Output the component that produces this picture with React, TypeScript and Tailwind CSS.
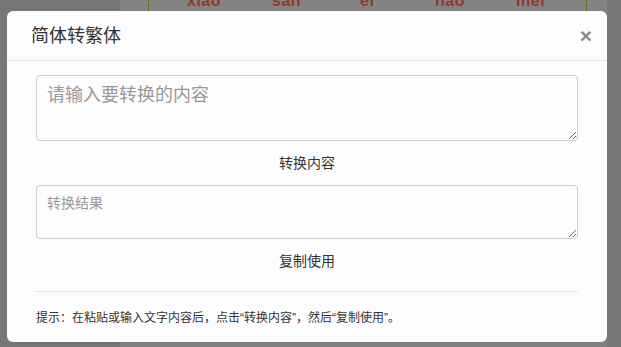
import React from "react";

const pinyin = [
  { text: "xiao", w: "w-[85px]" },
  { text: "san", w: "w-[88px]" },
  { text: "er", w: "w-[75px]" },
  { text: "hao", w: "w-[81px]" },
  { text: "mei", w: "w-[60px]" },
];

const font = "font-['Liberation_Sans','Noto_Sans_CJK_SC',sans-serif]";

const Backdrop = () => (
  <div className="flex h-[347px] w-full">
    <div className="w-[120px] bg-[#767676]" />
    <div className="flex flex-1 flex-col bg-[#7f7f7f]">
      <div className="flex h-[11px] bg-[#838383]">
        <div className="w-[28px]" />
        <div className="h-full border-l border-dashed border-[#6e5f1c]" />
        <div className={`flex flex-1 pl-[38px] ${font}`}>
          {pinyin.map((p) => (
            <span
              key={p.text}
              className={`${p.w} -mt-[8px] text-[16px] font-bold leading-[18px] tracking-[0.5px] text-[#8f3c24]`}
            >
              {p.text}
            </span>
          ))}
        </div>
        <div className="h-full border-l border-dashed border-[#6e5f1c]" />
        <div className="w-[20px]" />
      </div>
    </div>
    <div className="w-[14px] bg-[#777777]" />
  </div>
);

const TextButton = ({ label, h }: { label: string; h: string }) => (
  <div className={`flex ${h} items-center justify-center`}>
    <button className="text-[14px] leading-[20px] text-[#333]">{label}</button>
  </div>
);

export default function App() {
  return (
    <div className={`relative h-[347px] w-[621px] overflow-hidden ${font}`}>
      <Backdrop />
      <div className="absolute left-[7px] top-[11px] flex h-[331px] w-[600px] flex-col rounded-[6px] bg-[#fdfdfd]">
        <div className="flex h-[50px] items-center justify-between border-b border-[#e5e5e5] pl-[24px] pr-[15px]">
          <h4 className="text-[18px] leading-[24px] text-[#333]">简体转繁体</h4>
          <button className="text-[21px] font-bold leading-none text-[#888] -mt-[1px]">
            ×
          </button>
        </div>
        <div className="flex flex-col px-[29px] pt-[14px]">
          <textarea
            className="h-[66px] w-full rounded-[4px] border border-[#ccc] px-[10px] pt-[6px] text-[18px] leading-[26px] text-[#555] placeholder:text-[#999] outline-none"
            placeholder="请输入要转换的内容"
          />
          <TextButton label="转换内容" h="h-[44px]" />
          <textarea
            className="h-[54px] w-full rounded-[4px] border border-[#ccc] px-[10px] pt-[7px] text-[14px] leading-[20px] text-[#555] placeholder:text-[#999] outline-none"
            placeholder="转换结果"
          />
          <TextButton label="复制使用" h="h-[44px]" />
          <div className="mt-[8px] border-t border-[#e5e5e5]" />
          <p className="pt-[18px] text-[12px] leading-[16px] text-[#333]">
            提示：在粘贴或输入文字内容后，点击“转换内容”，然后“复制使用”。
          </p>
        </div>
      </div>
    </div>
  );
}
